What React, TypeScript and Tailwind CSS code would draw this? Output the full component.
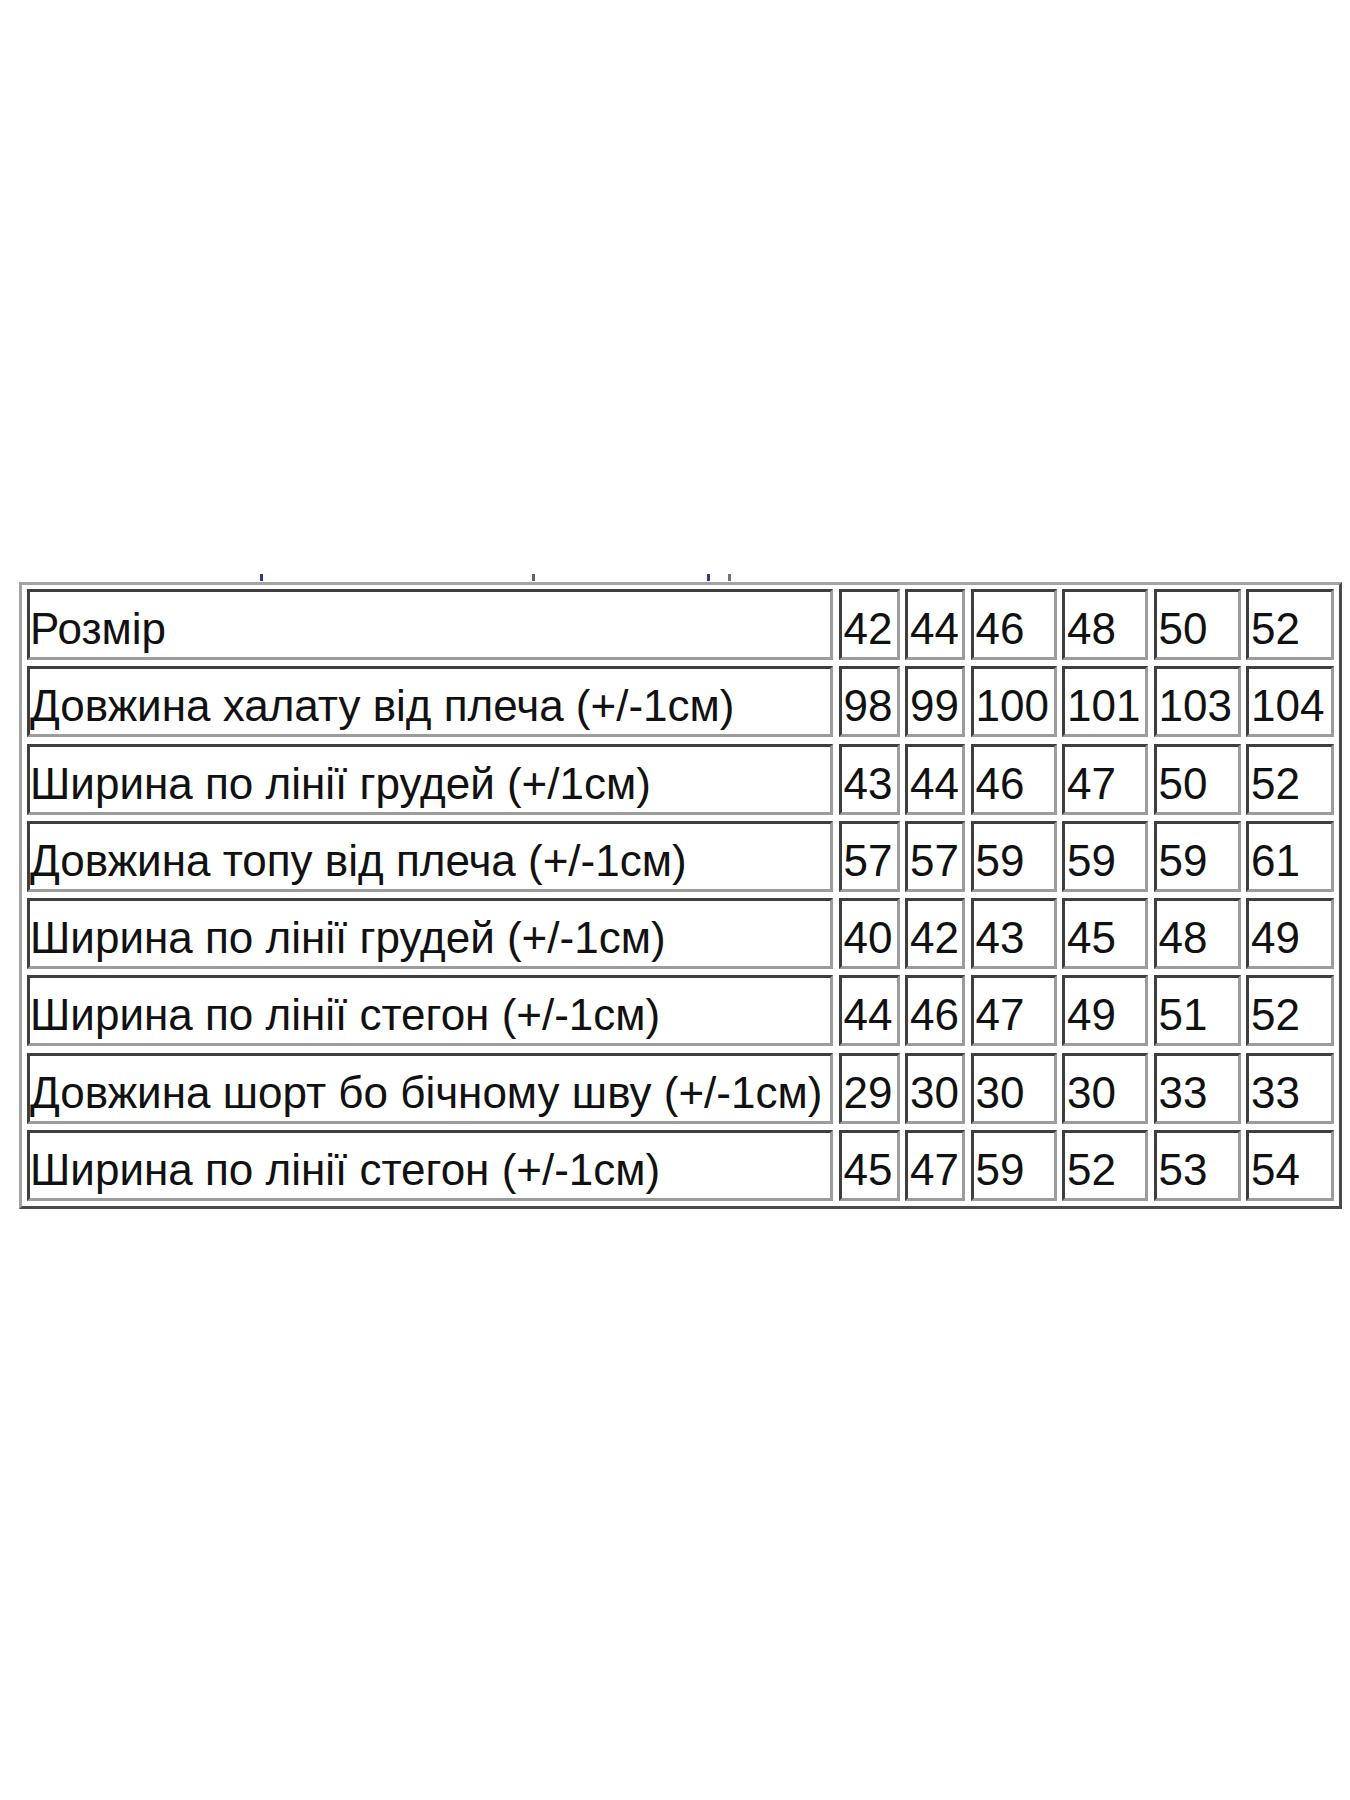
const ROWS: [string, string[]][] = [
  ['Розмір', ['42', '44', '46', '48', '50', '52']],
  ['Довжина халату від плеча (+/-1см)', ['98', '99', '100', '101', '103', '104']],
  ['Ширина по лінії грудей (+/1см)', ['43', '44', '46', '47', '50', '52']],
  ['Довжина топу від плеча (+/-1см)', ['57', '57', '59', '59', '59', '61']],
  ['Ширина по лінії грудей (+/-1см)', ['40', '42', '43', '45', '48', '49']],
  ['Ширина по лінії стегон (+/-1см)', ['44', '46', '47', '49', '51', '52']],
  ['Довжина шорт бо бічному шву (+/-1см)', ['29', '30', '30', '30', '33', '33']],
  ['Ширина по лінії стегон (+/-1см)', ['45', '47', '59', '52', '53', '54']],
];

function Cell({ children, label }: { children: React.ReactNode; label?: boolean }) {
  return (
    <div className={(label ? 'pl-0 ' : 'pl-[2px] ') + 'h-[71px] flex items-center pt-2 whitespace-nowrap overflow-hidden border-[3px] border-t-[#3e3e3e] border-l-[#3e3e3e] border-r-[#9c9c9c] border-b-[#9c9c9c] bg-white text-[#111]'}>
      {children}
    </div>
  );
}

export default function App() {
  return (
    <div className="w-[1350px] h-[1800px] bg-white pt-[574px] font-['Liberation_Sans',Arial,sans-serif] text-[44px] leading-[49px]">
      <div className="flex h-[8px] items-start">
        <span className="ml-[260px] w-[3px] h-[7px] bg-[#2c3f6e]" />
        <span className="ml-[269px] w-[3px] h-[7px] bg-[#5b6a58]" />
        <span className="ml-[172px] w-[3px] h-[7px] bg-[#3a3a78]" />
        <span className="ml-[18px] w-[3px] h-[7px] bg-[#6b7a70]" />
      </div>
      <div className="ml-[19px] w-[1323px] border-[3px] border-t-[#a3a3a3] border-l-[#a3a3a3] border-r-[#4a4a4a] border-b-[#4a4a4a] pt-[4px] pl-[5px] pb-[5px]">
        <div className="grid grid-cols-[806px_61px_60px_86px_86px_87px_88px] gap-x-[5.5px] gap-y-[6.3px]">
          {ROWS.map(([label, vals], i) => (
            <>
              <Cell key={'l' + i} label>{label}</Cell>
              {vals.map((v, j) => (
                <Cell key={i + '-' + j}>{v}</Cell>
              ))}
            </>
          ))}
        </div>
      </div>
    </div>
  );
}
